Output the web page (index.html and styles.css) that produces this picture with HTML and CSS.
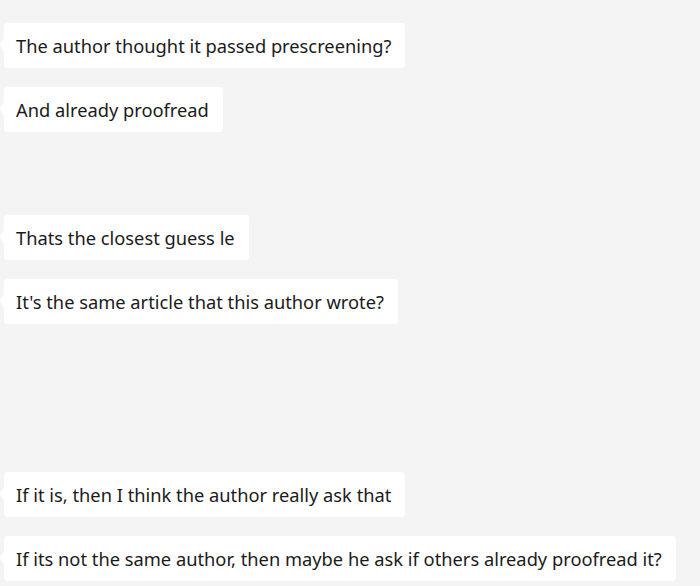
FILE: index.html
```html
<!DOCTYPE html>
<html lang="en">
<head>
  <meta charset="UTF-8" />
  <title>Chat</title>
  <link rel="stylesheet" href="styles.css">
</head>
<body>
  <div class="chat">
    <div class="msg">The author thought it passed prescreening?</div>
    <div class="msg">And already proofread</div>
    <div class="msg gap-1">Thats the closest guess le</div>
    <div class="msg">It's the same article that this author wrote?</div>
    <div class="msg gap-2">If it is, then I think the author really ask that</div>
    <div class="msg">If its not the same author, then maybe he ask if others already proofread it?</div>
  </div>
</body>
</html>
```

FILE: styles.css
```css
/* Page */
body {
  margin: 0;
  background: #f4f4f4;
  font-family: 'Noto Sans', sans-serif;
}
/* Message list */
.chat {
  display: flex;
  flex-direction: column;
  align-items: flex-start;
  gap: 19px;
  padding: 23px 0 0 4px;
}
.msg {
  position: relative;
  background: #fff;
  color: #1b1b1b;
  font-size: 18.3px;
  line-height: 45px;
  height: 45px;
  padding: 0 14px 0 12px;
  border-radius: 4px;
  white-space: nowrap;
}
/* little tail on the left */
.msg::before {
  content: '';
  position: absolute;
  left: -4px;
  top: 15px;
  border-top: 7px solid transparent;
  border-bottom: 7px solid transparent;
  border-right: 4px solid #fff;
}
.gap-1 {
  margin-top: 64px;
}
.gap-2 {
  margin-top: 129px;
}
```
